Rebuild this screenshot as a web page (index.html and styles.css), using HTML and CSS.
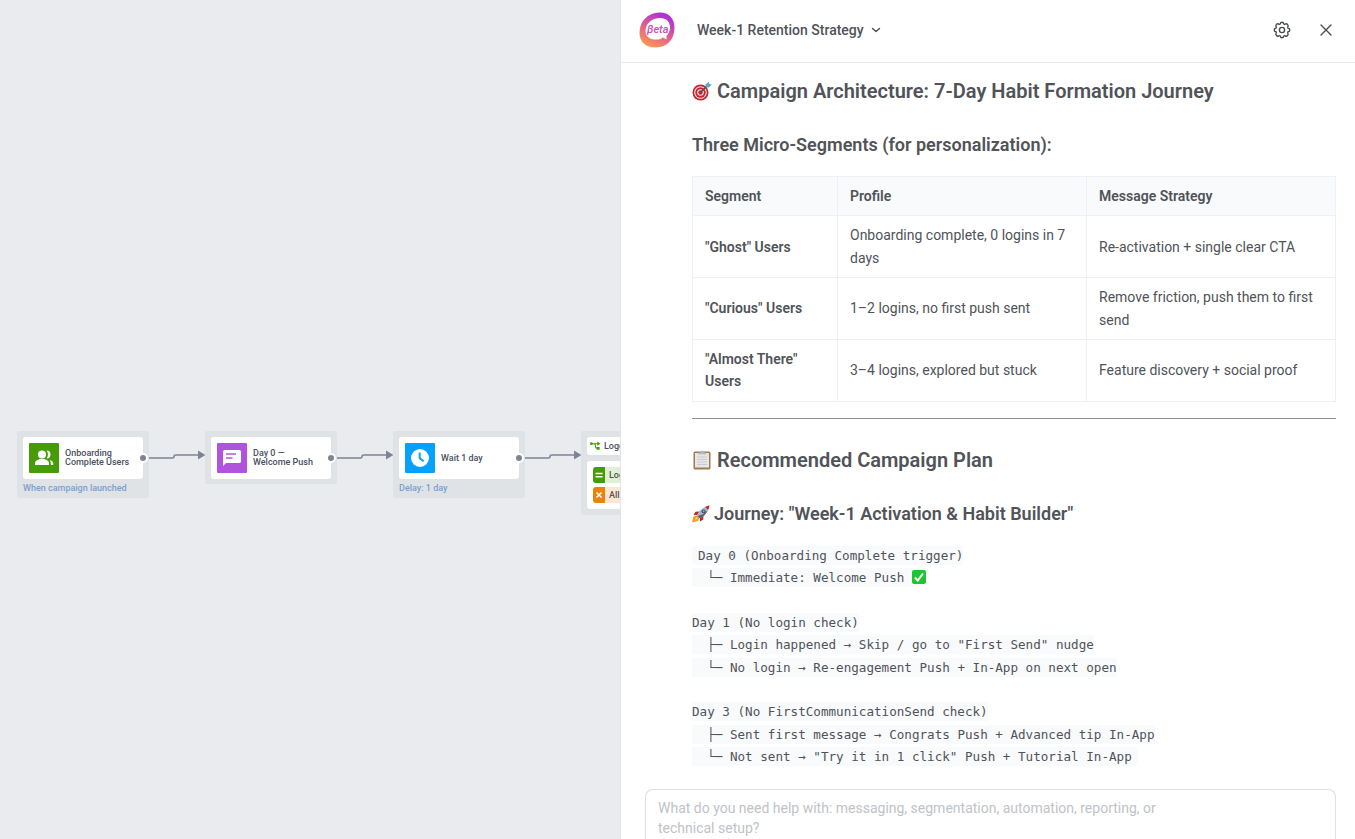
FILE: index.html
```html
<!DOCTYPE html>
<html lang="en">
<head>
<meta charset="utf-8">
<title>Week-1 Retention Strategy</title>
<link rel="stylesheet" href="styles.css">
</head>
<body>
<div class="app">
  <main class="canvas" aria-label="Campaign flow">
    <svg class="edges" width="700" height="560" aria-hidden="true">
      <g class="edge-line">
        <path d="M149 458H172Q174 458 174 456.500T176 455H200"/>
        <path d="M337 458H360Q362 458 362 456.500T364 455H388"/>
        <path d="M525 458H548Q550 458 550 456.500T552 455H576"/>
      </g>
      <g class="edge-head">
        <path d="M198 450.500L205.500 455L198 459.500Z"/>
        <path d="M386 450.500L393.500 455L386 459.500Z"/>
        <path d="M574 450.500L581.500 455L574 459.500Z"/>
      </g>
    </svg>

    <section class="node node-start">
      <div class="node-card">
        <svg class="node-icon icon-green" viewBox="0 0 30 30" aria-hidden="true">
          <circle cx="13" cy="11.500" r="4"/>
          <path d="M6 22v-1.500c0-3 3-4.500 7-4.500s7 1.500 7 4.500V22z"/>
          <path d="M17.500 7.500a4 4 0 0 1 0 8c2-2.300 2-5.700 0-8zM20.500 16.700c2.400.7 3.700 2 3.700 3.900V22h-2.400v-1.500c0-1.500-.4-2.800-1.300-3.800z"/>
        </svg>
        <span class="node-title">Onboarding<br>Complete Users</span>
      </div>
      <p class="node-note">When campaign launched</p>
      <i class="port"></i>
    </section>

    <section class="node node-push">
      <div class="node-card">
        <svg class="node-icon icon-purple" viewBox="0 0 30 30" aria-hidden="true">
          <path fill-rule="evenodd" d="M7.500 7h15q1.500 0 1.500 1.500v10q0 1.500-1.500 1.500H9l-3 3V8.500Q6 7 7.500 7zM9 10.200v1.600h10v-1.600zM9 14.200v1.600h6.500v-1.600z"/>
        </svg>
        <span class="node-title">Day 0 —<br>Welcome Push</span>
      </div>
      <i class="port"></i>
    </section>

    <section class="node node-wait">
      <div class="node-card">
        <svg class="node-icon icon-blue" viewBox="0 0 30 30" aria-hidden="true">
          <circle cx="15" cy="15" r="9"/>
          <path class="hands" d="M14.700 9.500v5.800l4 3"/>
        </svg>
        <span class="node-title">Wait 1 day</span>
      </div>
      <p class="node-note">Delay: 1 day</p>
      <i class="port"></i>
    </section>

    <section class="node node-split">
      <div class="split-head">
        <svg class="split-icon" viewBox="0 0 12 10" aria-hidden="true">
          <path class="branch" d="M1 2.500H9M4 2.500Q6 2.500 6 5T8 7.500H9"/>
          <circle cx="1.500" cy="2.500" r="1.500"/>
          <path d="M8 .2L11.500 2.500L8 4.800zM7.500 6h3v3h-3z"/>
        </svg>
        <span class="node-title">Logged in</span>
      </div>
      <div class="split-body">
        <div class="branch-row row-green">
          <svg class="branch-icon" viewBox="0 0 12 16" aria-hidden="true"><path d="M2.500 6.500h7M2.500 9.800h7"/></svg>
          <span>Logged in</span>
        </div>
        <div class="branch-row row-orange">
          <svg class="branch-icon" viewBox="0 0 12 16" aria-hidden="true"><path d="M3.500 5.500l5 5M8.500 5.500l-5 5"/></svg>
          <span>All others</span>
        </div>
      </div>
    </section>
  </main>

  <aside class="panel">
    <header class="panel-header">
      <svg class="logo" viewBox="0 0 36 36" role="img" aria-label="Beta">
        <defs>
          <linearGradient id="ring" x1=".75" y1="0" x2=".25" y2="1">
            <stop offset="0" stop-color="#a62be0"/>
            <stop offset=".5" stop-color="#dd5a96"/>
            <stop offset="1" stop-color="#ff9a4c"/>
          </linearGradient>
        </defs>
        <path fill="url(#ring)" d="M20 .5C29 0 35.500 6 35.500 15.500C35.500 27 28.500 35.500 16.500 35.500C6.500 35.500 .5 29.500 .5 21C.5 9 9 1 20 .5z"/>
        <path fill="#fff" d="M20 6C27 5.700 31 9.500 31 15.500C31 19 29.500 22 27.500 24L27.500 27.500L24 25.500L21.500 27C14 29 6.500 26 6.500 19.500C6.500 12 12 6.500 20 6z"/>
        <text class="logo-text" x="8" y="21">βeta</text>
      </svg>
      <button class="title-button" type="button">
        <span>Week-1 Retention Strategy</span>
        <svg width="10" height="10" viewBox="0 0 10 10" aria-hidden="true"><path class="stroke" d="M1.500 3.500L5 6.500L8.500 3.500"/></svg>
      </button>
      <div class="header-actions">
        <button class="icon-button" type="button" aria-label="Settings">
          <svg width="18" height="18" viewBox="0 0 18 18" aria-hidden="true">
            <path class="stroke" d="M7.300 2.800Q7.500 1.200 9 1.200T10.700 2.800Q11 3.600 12.200 3.200Q13.500 2.300 14.500 3.500Q15.700 4.500 14.800 5.800Q14.400 7 15.200 7.300Q16.800 7.500 16.800 9T15.200 10.700Q14.400 11 14.800 12.200Q15.700 13.500 14.500 14.500Q13.500 15.700 12.200 14.800Q11 14.400 10.700 15.200Q10.500 16.800 9 16.800T7.300 15.200Q7 14.400 5.800 14.800Q4.500 15.700 3.500 14.500Q2.300 13.500 3.200 12.200Q3.600 11 2.800 10.700Q1.200 10.500 1.200 9T2.800 7.300Q3.600 7 3.200 5.800Q2.300 4.500 3.500 3.500Q4.500 2.300 5.800 3.200Q7 3.600 7.300 2.800z"/>
            <circle class="stroke" cx="9" cy="9" r="2.600"/>
          </svg>
        </button>
        <button class="icon-button" type="button" aria-label="Close">
          <svg width="12" height="12" viewBox="0 0 12 12" aria-hidden="true"><path class="stroke" d="M1 1L11 11M11 1L1 11"/></svg>
        </button>
      </div>
    </header>

    <article class="message">
      <h2>
        <svg class="emoji" viewBox="0 0 20 20" aria-hidden="true">
          <circle cx="8.500" cy="11.500" r="8" fill="#c8232c"/>
          <circle cx="8.500" cy="11.500" r="6.300" fill="#f4e9e9"/>
          <circle cx="8.500" cy="11.500" r="5.200" fill="#c8232c"/>
          <circle cx="8.500" cy="11.500" r="3.300" fill="#f4e9e9"/>
          <circle cx="8.500" cy="11.500" r="2.200" fill="#c8232c"/>
          <path d="M8.500 11.500L15 5" stroke="#3b4a55" stroke-width="1.200"/>
          <path d="M13.500 3.500L17 .8L17.200 3L19.800 3.400L16.800 6.500L13.800 6.200z" fill="#4fb3bf"/>
        </svg>
        <span>Campaign Architecture: 7-Day Habit Formation Journey</span>
      </h2>
      <h3>Three Micro-Segments (for personalization):</h3>

      <table>
        <thead>
          <tr><th class="col-segment" scope="col">Segment</th><th scope="col">Profile</th><th scope="col">Message Strategy</th></tr>
        </thead>
        <tbody>
          <tr><th scope="row">"Ghost" Users</th><td>Onboarding complete, 0 logins in 7 days</td><td>Re-activation + single clear CTA</td></tr>
          <tr><th scope="row">"Curious" Users</th><td>1–2 logins, no first push sent</td><td>Remove friction, push them to first send</td></tr>
          <tr><th scope="row">"Almost There" Users</th><td>3–4 logins, explored but stuck</td><td>Feature discovery + social proof</td></tr>
        </tbody>
      </table>

      <hr>

      <h2>
        <svg class="emoji" viewBox="0 0 20 20" aria-hidden="true">
          <rect x="1.500" y="1.500" width="17" height="18" rx="1.500" fill="#a07a4c"/>
          <rect x="3" y="3" width="14" height="14.500" fill="#e4e6e8"/>
          <path d="M5 7h10M5 9.500h10M5 12h10M5 14.500h10" stroke="#c9ccd0" stroke-width="1"/>
          <path d="M6 4.200V2.500h2.500Q8.700.5 10 .5t1.500 2H14v1.700z" fill="#b4b9bd"/>
        </svg>
        <span>Recommended Campaign Plan</span>
      </h2>
      <h3>
        <svg class="emoji emoji-small" viewBox="0 0 18 18" aria-hidden="true">
          <path d="M5 10.500L1.500 11.500L0 17.500L6 16L7.500 13z" fill="#f59a23"/>
          <path d="M4.500 12L2.500 15.500L6 13.500z" fill="#ffe04d"/>
          <path d="M7.500 6.500L3.500 6.800L1.500 10L5.500 10zM11.500 10.500L11.200 14.500L8 16.500L8 12.500z" fill="#c8232c"/>
          <path d="M4.800 10.200Q8 2.500 17.500 .5Q15.500 10 7.800 13.200z" fill="#aab4c0"/>
          <path d="M13.200 1.900Q15.500 .8 17.500 .5Q17.200 2.600 16.200 4.800z" fill="#c8232c"/>
          <path d="M5.600 11L7.800 13.200Q13.500 10.500 15.800 5.500Q11 10 5.600 11z" fill="#55606e"/>
          <circle cx="11.600" cy="6.300" r="1.900" fill="#26415f"/>
          <circle cx="11.600" cy="6.300" r="1.100" fill="#6fb5e6"/>
        </svg>
        <span>Journey: "Week-1 Activation &amp; Habit Builder"</span>
      </h3>

      <p class="plan"><code>Day 0 (Onboarding Complete trigger)
  └─ Immediate: Welcome Push <svg class="check" viewBox="0 0 14 14" aria-hidden="true"><rect width="14" height="14" rx="2" fill="#1fc52f"/><path d="M3 7.500L5.800 10.500L11 3.500" fill="none" stroke="#fff" stroke-width="2"/></svg>

Day 1 (No login check)
  ├─ Login happened → Skip / go to "First Send" nudge
  └─ No login → Re-engagement Push + In-App on next open

Day 3 (No FirstCommunicationSend check)
  ├─ Sent first message → Congrats Push + Advanced tip In-App
  └─ Not sent → "Try it in 1 click" Push + Tutorial In-App</code></p>
    </article>

    <form class="composer">
      <textarea rows="2" aria-label="Message" placeholder="What do you need help with: messaging, segmentation, automation, reporting, or technical setup?"></textarea>
    </form>
  </aside>
</div>
</body>
</html>
```
FILE: styles.css
```css
* { box-sizing: border-box; }

body {
  margin: 0;
  font-family: Roboto, "Liberation Sans", sans-serif;
  font-size: 14px;
  line-height: 1.6;
  color: #505358;
}

h2, h3, p { margin: 0; }

button {
  padding: 0;
  border: 0;
  background: none;
  font: inherit;
  color: inherit;
  cursor: pointer;
}

.app {
  display: grid;
  grid-template-columns: 620fr 735fr;
  height: 100vh;
  overflow: hidden;
}

/* Flow canvas */
.canvas {
  position: relative;
  overflow: hidden;
  background: #eaebef;
}

.edges { position: absolute; top: 0; left: 0; }
.edge-line { fill: none; stroke: #7f8494; stroke-width: 1.5; }
.edge-head { fill: #7f8494; }

.node {
  position: absolute;
  top: 431px;
  width: 132px;
  padding: 6px 6px 5px;
  border-radius: 2px;
  background: #e0e3e6;
  font-size: 9px;
  font-weight: 500;
  line-height: 9px;
}
.node-start { left: 17px; }
.node-push { left: 205px; }
.node-wait { left: 393px; }
.node-split { left: 581px; padding-bottom: 6px; }

.node-card {
  display: flex;
  align-items: center;
  gap: 6px;
  height: 42px;
  padding: 6px;
  border-radius: 3px;
  background: #fff;
}
.node-icon { flex: none; width: 30px; height: 30px; border-radius: 1px; fill: #fff; }
.icon-green { background: #469b07; }
.icon-purple { background: #b054de; }
.icon-blue { background: #05a1ff; }
.hands { fill: none; stroke: #05a1ff; stroke-width: 2; }
.node-title { color: #4a5062; white-space: nowrap; }
.node-note { margin-top: 5px; color: #7a9fd2; white-space: nowrap; }

.port {
  position: absolute;
  top: 22px;
  right: 1px;
  width: 10px;
  height: 10px;
  border: 2px solid #fff;
  border-radius: 50%;
  background: #7f8494;
}

.split-head {
  display: flex;
  align-items: center;
  gap: 3px;
  height: 18px;
  padding: 0 3px;
  border-radius: 3px;
  background: #fff;
}
.split-icon { width: 11px; height: 10px; fill: #469b07; }
.branch { fill: none; stroke: #469b07; stroke-width: 1.2; }

.split-body {
  display: grid;
  gap: 4px;
  margin-top: 6px;
  padding: 6px;
  border-radius: 3px;
  background: #fff;
}
.branch-row {
  display: flex;
  align-items: center;
  gap: 4px;
  height: 16px;
  border-radius: 3px;
  overflow: hidden;
}
.branch-icon { width: 12px; height: 16px; fill: none; stroke: #fff; stroke-width: 1.5; }
.row-green { background: #dff0d4; }
.row-green .branch-icon { background: #469b07; }
.row-orange { background: #fde6d4; }
.row-orange .branch-icon { background: #ec8309; }

/* Assistant panel */
.panel {
  display: flex;
  flex-direction: column;
  min-width: 0;
  min-height: 0;
  border-left: 1px solid #e2e6ec;
  background: #fff;
}

.panel-header {
  display: flex;
  align-items: center;
  flex: none;
  height: 63px;
  padding: 0 17px 2px 18px;
  border-bottom: 1px solid #e8ecf1;
}
.logo { width: 36px; height: 36px; }
.logo-text { font-size: 11px; font-style: italic; font-weight: 500; fill: #cd4fb0; }
.title-button {
  display: flex;
  align-items: center;
  gap: 7px;
  margin-left: 22px;
  font-weight: 500;
}
.stroke {
  fill: none;
  stroke: #494c52;
  stroke-width: 1.4;
  stroke-linecap: round;
  stroke-linejoin: round;
}
.header-actions { display: flex; gap: 20px; margin-left: auto; }
.icon-button { display: grid; place-items: center; width: 24px; height: 24px; }

.message {
  flex: 1;
  min-height: 0;
  overflow: hidden;
  padding: 12px 19px 0 71px;
}
.message h2, .message h3 { display: flex; align-items: center; font-weight: 600; }
.message h2 { gap: 5px; font-size: 20px; line-height: 32px; }
.message h3 { gap: 4px; margin-top: 24px; font-size: 18px; line-height: 28px; }
.emoji { flex: none; width: 20px; height: 20px; }
.emoji-small { width: 18px; height: 18px; }

table {
  width: 100%;
  margin-top: 17px;
  border-collapse: collapse;
  table-layout: fixed;
}
th, td {
  padding: 8px 12px;
  border: 1px solid #edf1f5;
  text-align: left;
  vertical-align: middle;
}
th { font-weight: 600; }
thead th { background: #f9fafc; }
.col-segment { width: 145px; }

hr {
  height: 1px;
  margin: 16px 0 25px;
  border: 0;
  background: #8d8f93;
}

.plan { margin-top: 16px; }
code {
  padding: 2px 6px;
  border-radius: 4px;
  background: #f9fafc;
  font-family: "DejaVu Sans Mono", monospace;
  font-size: 0.9em;
  white-space: pre-wrap;
}
.check { width: 14px; height: 14px; vertical-align: -2px; }

.composer {
  display: flex;
  flex: none;
  margin: 0 19px 0 24px;
  padding: 8px 170px 1px 12px;
  border: 1px solid #dcdfe3;
  border-bottom: 0;
  border-radius: 8px 8px 0 0;
}
textarea {
  flex: 1;
  min-width: 0;
  padding: 0;
  border: 0;
  outline: 0;
  resize: none;
  overflow: hidden;
  background: none;
  font: inherit;
  line-height: 20px;
  color: inherit;
}
textarea::placeholder { color: #c0c3c7; opacity: 1; }
```
